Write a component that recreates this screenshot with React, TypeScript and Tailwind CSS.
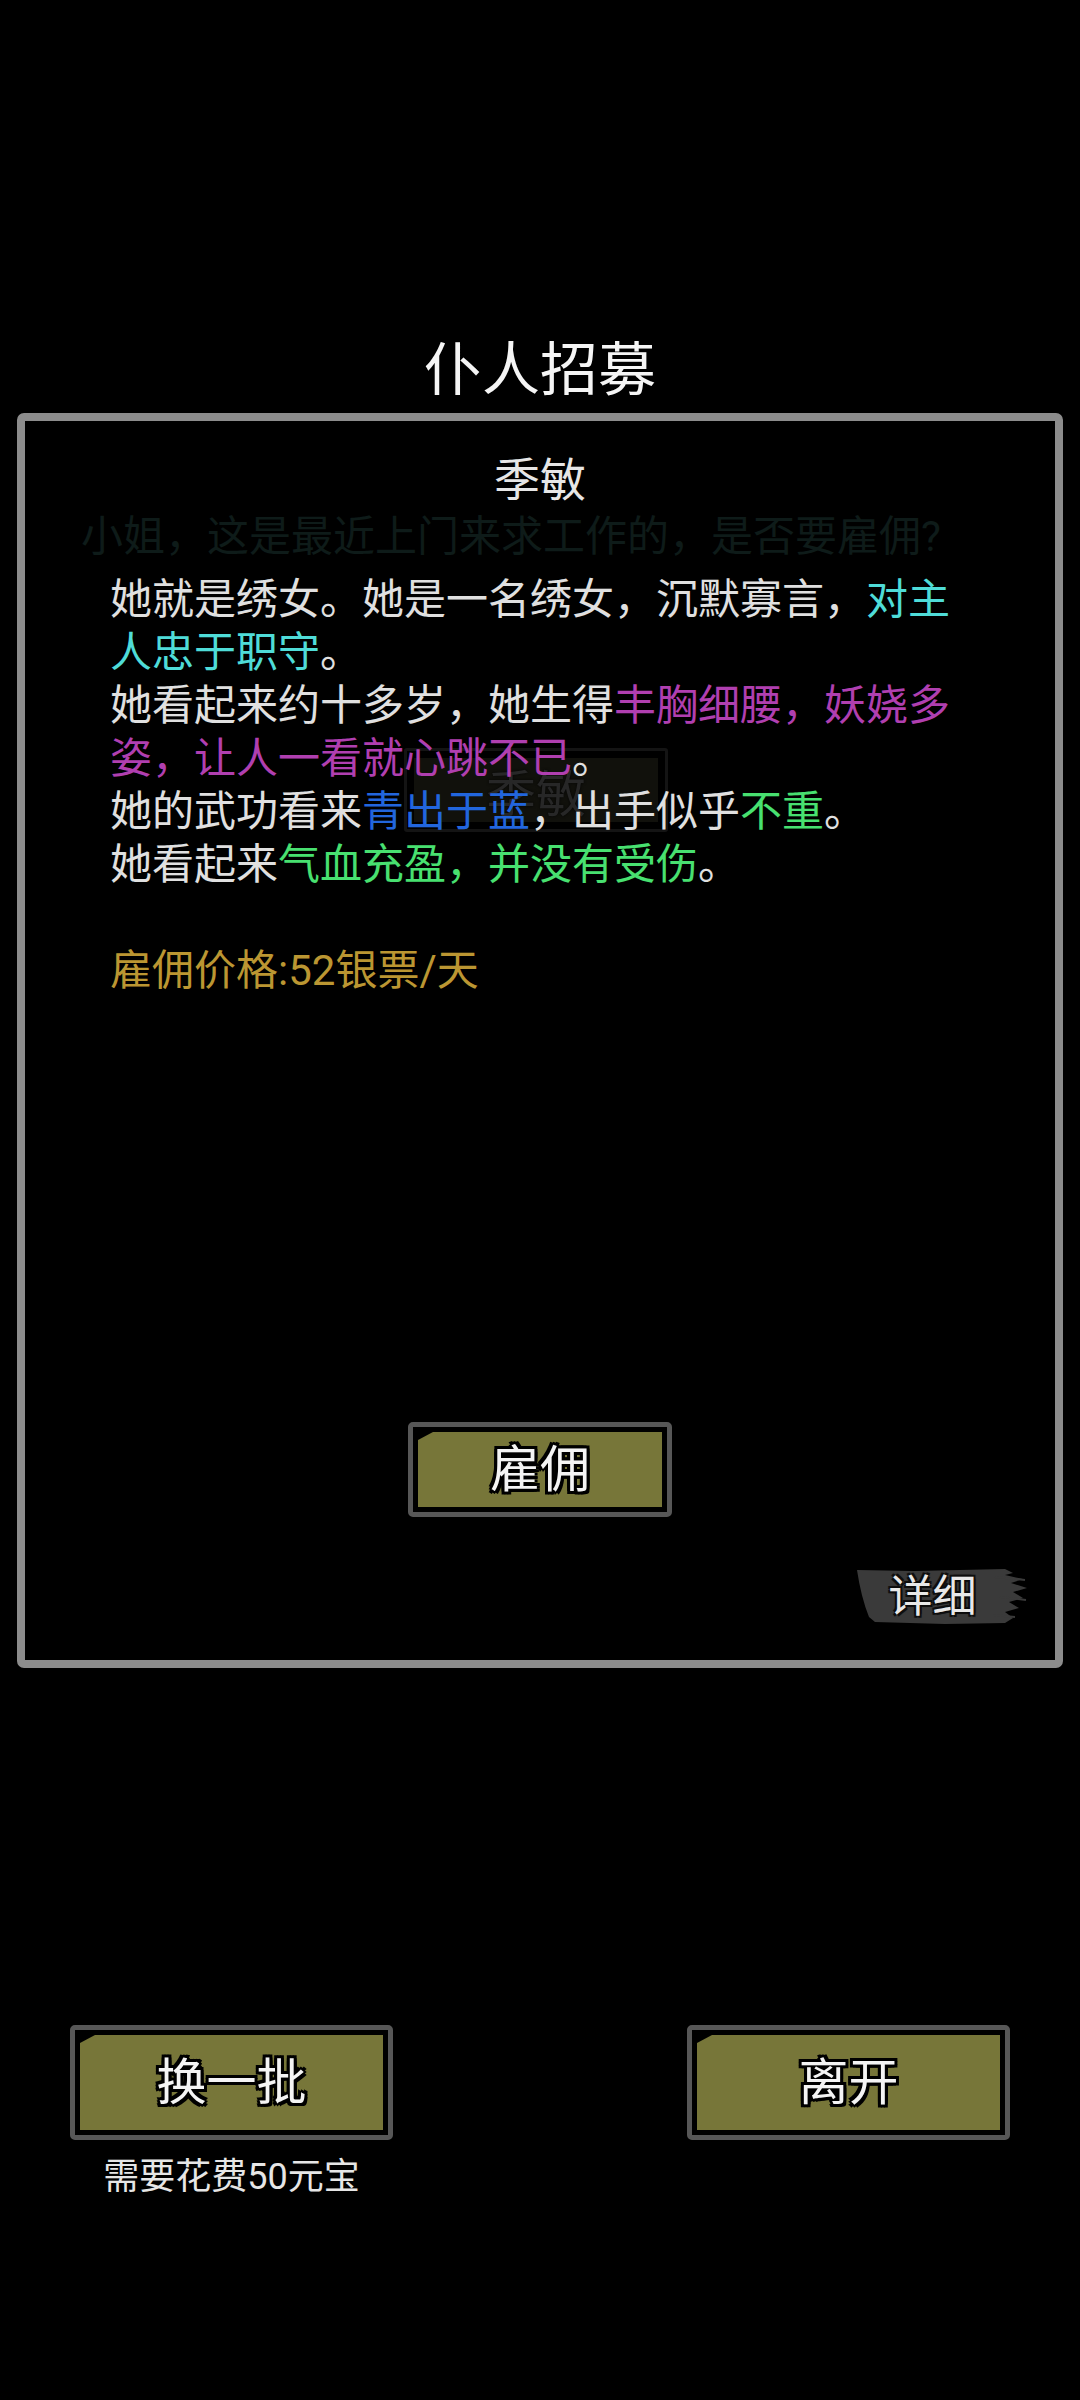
import React from "react";

function OliveButton({ label, w, h }: { label: string; w: string; h: string }) {
  return (
    <div className={`${w} ${h} border-[5px] border-[#575757] rounded-[5px] p-[5px] bg-black`}>
      <div className="w-full h-full bg-[#777639] [clip-path:polygon(15px_0,100%_0,100%_100%,0_100%,0_8px)] flex items-center justify-center">
        <span className="text-[50px] leading-[60px] text-[#f4f4f4] [text-shadow:0_0_3px_#000,3px_3px_0_#000,-3px_-3px_0_#000,3px_-3px_0_#000,-3px_3px_0_#000,0_3px_0_#000,3px_0_0_#000,0_-3px_0_#000,-3px_0_0_#000]">
          {label}
        </span>
      </div>
    </div>
  );
}

export default function App() {
  return (
    <div className="w-[1080px] h-[2400px] bg-black flex flex-col pt-[338px] font-['Roboto','Noto_Sans_CJK_SC',sans-serif]">
      <h1 className="text-center text-[58px] leading-[64px] text-[#f5f5f5] font-normal">仆人招募</h1>

      <div className="relative mx-[17px] mt-[11px] h-[1255px] border-[8px] border-[#8c8c8c] rounded-[7px] flex flex-col">
        {/* faint ghost button behind text */}
        <div className="absolute left-[379px] top-[327px] w-[264px] h-[84px] border-[3px] border-[#141414] rounded-[3px] p-[7px]">
          <div className="w-full h-full bg-[#11110c] flex items-center justify-center pt-[10px]">
            <span className="text-[50px] leading-[58px] text-[#272727] [text-shadow:0_0_3px_#050505]">季敏</span>
          </div>
        </div>

        <div className="relative pt-[31px] text-center text-[46px] leading-[56px] text-[#e6e6e6]">季敏</div>
        <div className="relative mt-[3px] pl-[56px] text-[42px] leading-[52px] text-[#0e1b19] whitespace-nowrap">
          小姐，这是最近上门来求工作的，是否要雇佣?
        </div>

        <div className="relative mt-[10px] pl-[85px] w-[930px] text-[42px] leading-[53px] text-[#e0e0e0]">
          <p>
            她就是绣女。她是一名绣女，沉默寡言，<span className="text-[#4fdcd8]">对主人忠于职守</span>。
          </p>
          <p>
            她看起来约十多岁，她生得<span className="text-[#b03fb0]">丰胸细腰，妖娆多姿，让人一看就心跳不已</span>。
          </p>
          <p>
            她的武功看来<span className="text-[#2266dd]">青出于蓝</span>，出手似乎<span className="text-[#48e070]">不重</span>。
          </p>
          <p>
            她看起来<span className="text-[#48e070]">气血充盈，并没有受伤</span>。
          </p>
          <p className="mt-[53px] text-[#bb9632]">雇佣价格:52银票/天</p>
        </div>

        <div className="mt-[425px] flex justify-center">
          <OliveButton label="雇佣" w="w-[264px]" h="h-[95px]" />
        </div>

        <div className="mt-[50px] flex justify-end pr-[28px]">
          <div className="relative w-[172px] h-[59px] flex items-center justify-center pr-[17px]">
            <svg className="absolute inset-0" width="172" height="59" viewBox="0 0 172 59">
              <path
                d="M2 3 L60 4 L150 2 L158 6 L150 8 L168 12 L156 16 L172 21 L158 25 L168 31 L154 35 L164 41 L150 45 L158 51 L150 56 L90 57 L20 55 L14 50 Q6 30 2 3 Z"
                fill="#3a3a3a"
              />
              <path d="M140 10 L170 13 M145 30 L171 33 M138 48 L160 50" stroke="#3a3a3a" strokeWidth="2" />
            </svg>
            <span className="relative text-[44px] leading-[52px] text-[#e8e8e8] [text-shadow:0_0_3px_#000,2px_2px_0_#111,-2px_-2px_0_#111,2px_-2px_0_#111,-2px_2px_0_#111]">
              详细
            </span>
          </div>
        </div>
      </div>

      <div className="mt-[357px] flex justify-between px-[70px]">
        <div className="flex flex-col items-center">
          <OliveButton label="换一批" w="w-[323px]" h="h-[115px]" />
          <div className="mt-[15px] text-[36px] leading-[44px] text-[#e6e6e6]">需要花费50元宝</div>
        </div>
        <div>
          <OliveButton label="离开" w="w-[323px]" h="h-[115px]" />
        </div>
      </div>
    </div>
  );
}
